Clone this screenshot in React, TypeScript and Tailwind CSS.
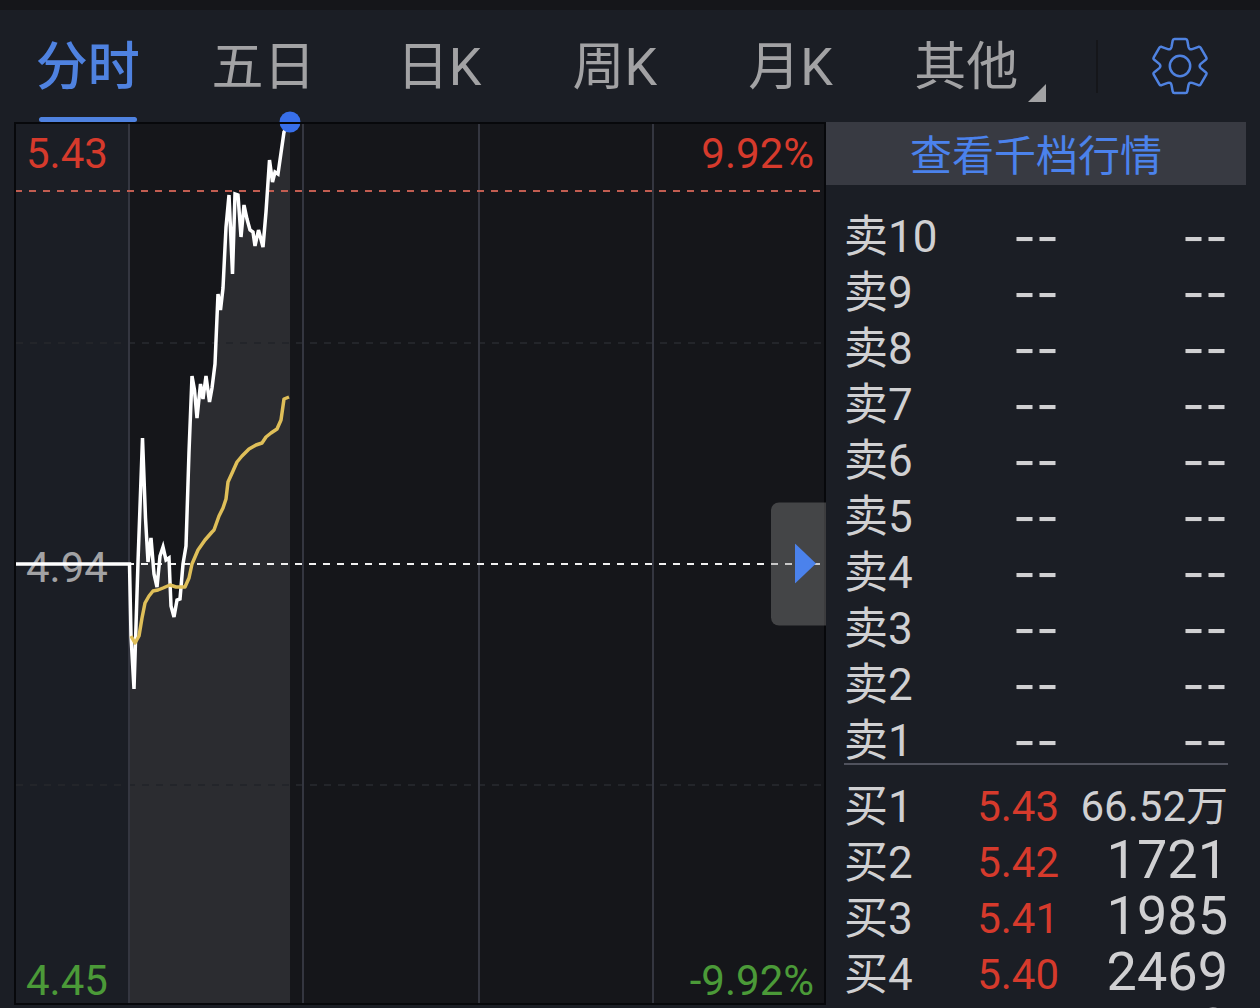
import React, { useState } from "react";

interface OrderRow {
  label: string;
  level: number;
  price: string;
  volume: string;
}

const TABS = ["分时", "五日", "日K", "周K", "月K", "其他"];

const SELL_ROWS: OrderRow[] = [10, 9, 8, 7, 6, 5, 4, 3, 2, 1].map((level) => ({
  label: "卖",
  level,
  price: "--",
  volume: "--",
}));

const BUY_ROWS: OrderRow[] = [
  { label: "买", level: 1, price: "5.43", volume: "66.52万" },
  { label: "买", level: 2, price: "5.42", volume: "1721" },
  { label: "买", level: 3, price: "5.41", volume: "1985" },
  { label: "买", level: 4, price: "5.40", volume: "2469" },
  { label: "买", level: 5, price: "5.39", volume: "112" },
];

// Chart space is 812 x 883
const PRICE_LINE =
  "2,442 115.500,442 117,514 120,567 124,440 128.500,316 131.500,396 134,440 137,416 140,452 143,465 146,434 149,425 152,438 155,436 157,484 160,495 163,478 166,477 169,442 172,424 175,330 178,254 180.500,268 183,296 186.500,262 189,277 192,254 195.500,280 198,266 201,242 204,172 206.500,188 209,166 212,105 215,73 218.500,152 221,72 224,73 227,115 230,83 233,97 236,108 239,110 241,124 244.500,108 249,125 252,90 255.500,38 258.500,60 261,50 264,52 270,10 276,2";

const AVERAGE_LINE =
  "117,514 121,521 125,514 128,496 131,481 135,474 139,469 144,468 149,466 156,463 162,465 171,465 175,456 178,442 184,428 191,418 198,410 200,408 205,394 209,386 212,377 214,360 219,349 223,340 228,334 235,327 242,323 248,321 252,315 257,311 263,307 267,298 270,277 275,275";

const GearIcon = () => (
  <svg viewBox="-30 -30 60 60" className="h-15 w-15" fill="none" stroke="#4f82e0" strokeWidth="2.500" strokeLinejoin="round" aria-hidden="true">
    <path d="M-8.500-19L-7.300-25.500Q-7-27-5.500-27H5.500Q7-27 7.300-25.500L8.500-19Q9.300-15.900 12.200-16.900L18.500-19.200Q19.900-19.600 20.600-18.400L26.400-8.400Q27-7.300 26-6.500L20.700-2.100Q18.500 0 20.700 2.100L26 6.500Q27 7.300 26.400 8.400L20.600 18.400Q19.900 19.600 18.500 19.200L12.200 16.900Q9.300 15.900 8.500 19L7.300 25.500Q7 27 5.500 27H-5.500Q-7 27-7.300 25.500L-8.500 19Q-9.300 15.900-12.200 16.900L-18.500 19.200Q-19.900 19.600-20.600 18.400L-26.400 8.400Q-27 7.300-26 6.500L-20.700 2.100Q-18.500 0-20.700-2.100L-26-6.500Q-27-7.300-26.400-8.400L-20.600-18.400Q-19.900-19.600-18.500-19.200L-12.200-16.900Q-9.300-15.900-8.500-19z" />
    <circle r="10.200" />
  </svg>
);

const PriceChart = () => (
  <svg viewBox="0 0 812 883" preserveAspectRatio="none" className="relative block h-full w-full overflow-visible" aria-hidden="true">
    <rect x="115" y="0" width="697" height="883" fill="#15161a" />
    <polygon points={`115,883 ${PRICE_LINE.replace("2,442 ", "")} 276,883`} fill="#2b2c30" />
    <g stroke="#23252a" strokeWidth="2" strokeDasharray="7 7">
      <path d="M2 221H812" />
      <path d="M2 663H812" />
    </g>
    <g stroke="#343640" strokeWidth="2">
      <path d="M115 1V882" />
      <path d="M289 1V882" />
      <path d="M465 1V882" />
      <path d="M639 1V882" />
    </g>
    <path d="M1 69H806" stroke="#c25d51" strokeWidth="2" strokeDasharray="7 7" />
    <path d="M1 442H806" stroke="#f0f0f0" strokeWidth="2" strokeDasharray="7 7" />
    <polyline points={PRICE_LINE} fill="none" stroke="#ffffff" strokeWidth="3.500" />
    <polyline points={AVERAGE_LINE} fill="none" stroke="#dfbf59" strokeWidth="3.500" strokeLinejoin="round" />
    <circle cx="276" cy="0" r="10.500" fill="#386fea" />
    <rect x="1" y="1" width="810" height="881" fill="none" stroke="#07080b" strokeWidth="2" />
  </svg>
);

const volumeSize = (volume: string) => {
  if (volume === "--") return "font-[Inter] text-[50px] leading-[56px]";
  return volume.includes("万") ? "text-[42px] leading-[56px]" : "pb-1.5 text-[54px] leading-[50px]";
};

const OrderTable: React.FC<{ rows: OrderRow[]; name: string }> = ({ rows, name }) => (
  <table aria-label={name} className="w-full table-fixed border-collapse text-[#d0d0d2]">
    <tbody>
      {rows.map((row) => (
        <tr key={row.level} className="h-14">
          <th scope="row" className="w-[30%] p-0 text-left text-[44px] leading-[56px] font-normal whitespace-nowrap">
            {row.label}
            {row.level}
          </th>
          <td
            className={`w-[26%] p-0 text-right leading-[56px] ${
              row.price === "--" ? "font-[Inter] text-[50px]" : "text-[42px] text-[#d63a2c]"
            }`}
          >
            {row.price}
          </td>
          <td className={`px-0 pt-0 text-right whitespace-nowrap ${volumeSize(row.volume)}`}>{row.volume}</td>
        </tr>
      ))}
    </tbody>
  </table>
);

const App = () => {
  const [activeTab, setActiveTab] = useState("分时");

  return (
    <div className="flex h-screen flex-col overflow-hidden border-t-10 border-[#15161a] bg-[#1b1e25] font-[Roboto,'Noto_Sans_CJK_SC',sans-serif]">
      {/* Period tabs */}
      <header className="flex h-28 shrink-0 items-stretch">
        <nav className="grid flex-1 grid-cols-6">
          {TABS.map((tab) => (
            <button
              key={tab}
              onClick={() => setActiveTab(tab)}
              className={`relative flex flex-col items-center justify-between pt-5 text-[52px] leading-[76px] ${
                activeTab === tab ? "font-medium text-[#4f82e0]" : "text-[#a2a2a4]"
              }`}
            >
              {tab}
              {activeTab === tab && <span className="h-[5px] w-[98px] rounded-full bg-[#4f82e0]" />}
              {tab === "其他" && (
                <svg viewBox="0 0 18 18" className="absolute right-2 bottom-5 h-[18px] w-[18px]" fill="#a2a2a4" aria-hidden="true">
                  <path d="M18 0V18H0z" />
                </svg>
              )}
            </button>
          ))}
        </nav>
        <div className="flex w-[206px] items-center pl-[42px]">
          <span className="h-[53px] w-0.5 bg-[#15161a]" />
          <button aria-label="设置" className="ml-[52px]">
            <GearIcon />
          </button>
        </div>
      </header>

      <main className="flex min-h-0 flex-1 pr-3.5 pl-3.5">
        {/* Intraday chart */}
        <section className="relative mb-[3px] min-w-0 flex-1 text-[42px] leading-[48px]">
          {/* the opening price sits under the price line */}
          <span className="absolute top-1/2 left-3 mt-1 -translate-y-1/2 text-[#a2a2a4]">4.94</span>
          <PriceChart />
          <span className="absolute top-2 left-3 text-[#d63a2c]">5.43</span>
          <span className="absolute top-2 right-3 text-[#d63a2c]">9.92%</span>
          <span className="absolute bottom-0 left-3 text-[#4b9a38]">4.45</span>
          <span className="absolute right-3 bottom-0 text-[#4b9a38]">-9.92%</span>
          <button
            aria-label="展开"
            className="absolute top-1/2 right-0 flex h-[123px] w-[55px] -translate-y-1/2 items-center justify-end rounded-l-lg bg-[#8c8c8c]/40 pr-2.5"
          >
            <svg viewBox="0 0 21 40" className="h-10 w-[21px]" fill="#4b82ec" aria-hidden="true">
              <path d="M0 0L21 20L0 40z" />
            </svg>
          </button>
        </section>

        {/* Order book */}
        <aside className="w-2/5 max-w-[420px] shrink-0">
          <button className="block h-[63px] w-full bg-[#383a42] pt-1.5 text-[42px] leading-none text-[#4b82ec]">
            查看千档行情
          </button>
          <div className="pt-6 pr-[18px] pl-[18px]">
            <OrderTable rows={SELL_ROWS} name="卖盘" />
            <div className="-mt-1.5 mb-3.5 border-t-2 border-[#50525d]" />
            <OrderTable rows={BUY_ROWS} name="买盘" />
          </div>
        </aside>
      </main>
    </div>
  );
};

export default App;
